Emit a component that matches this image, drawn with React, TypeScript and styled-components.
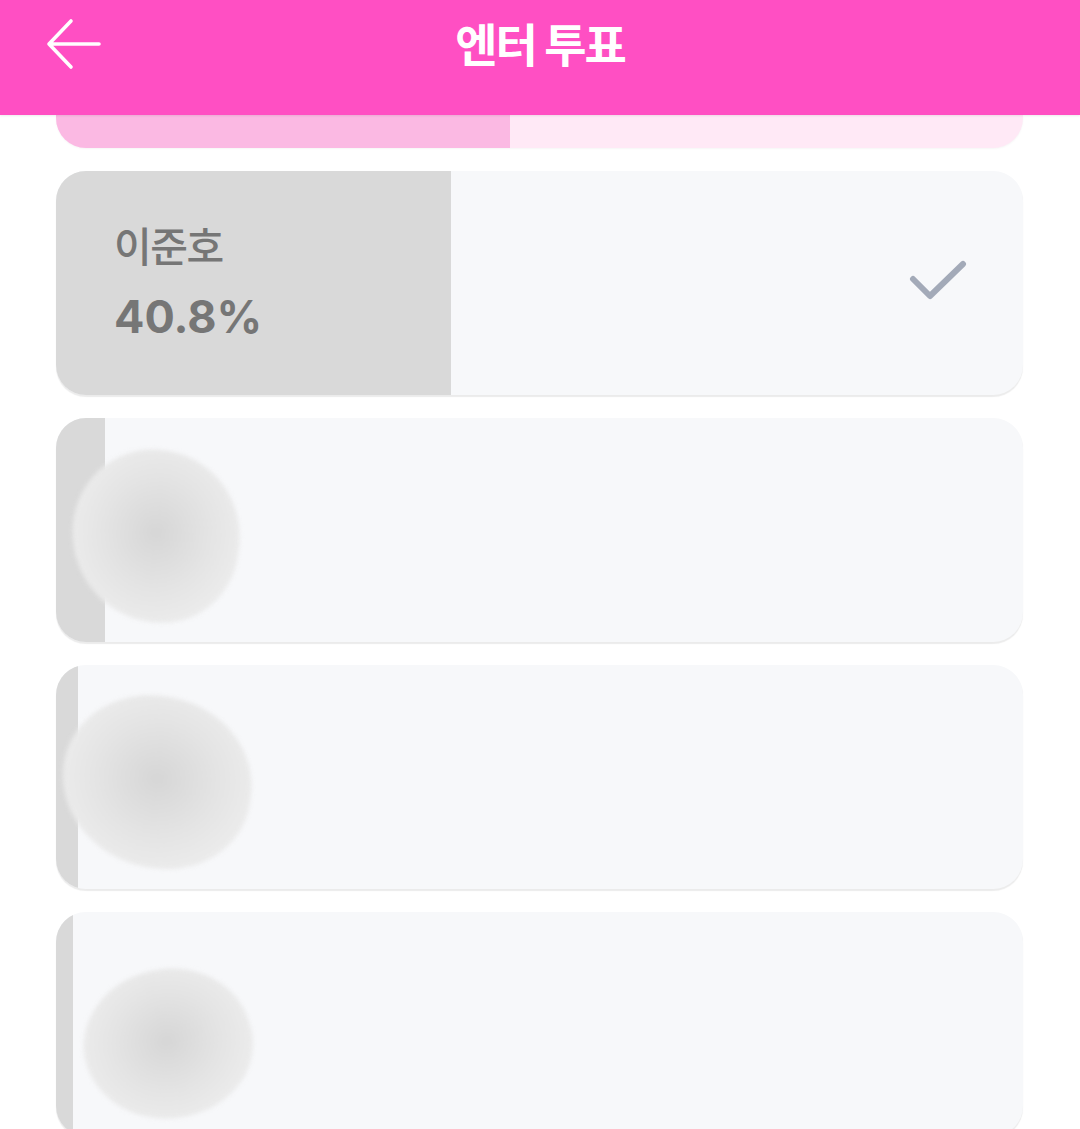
import * as React from 'react'
import styled, { createGlobalStyle } from 'styled-components'

const GlobalStyle = createGlobalStyle`
  html, body {
    margin: 0;
    padding: 0;
    background: #ffffff;
    height: 1129px;
    overflow: hidden;
    font-family: "Noto Sans CJK KR", "Noto Sans", sans-serif;
  }
`

const candidates = [
  { name: '이준호', rate: 40.8, voted: true },
  { name: null, rate: 5.1, voted: false },
  { name: null, rate: 2.3, voted: false },
  { name: null, rate: 1.8, voted: false },
]

export default function App() {
  return (
    <Page>
      <GlobalStyle />
      <Header>
        <BackButton aria-label="back">
          <svg width="58" height="54" viewBox="0 0 58 54" fill="none">
            <path d="M55 27H5M5 27L27 4M5 27L27 50" stroke="#fff" strokeWidth="3.6" strokeLinecap="round" strokeLinejoin="round" />
          </svg>
        </BackButton>
        <Title>엔터 투표</Title>
      </Header>

      <Content>
        <TopBar>
          <TopFill />
        </TopBar>

        {candidates.map((c, i) => (
          <Card key={i}>
            <Fill style={{ width: `${c.rate}%` }} />
            <CardBody>
              {c.name ? (
                <Info>
                  <Name>{c.name}</Name>
                  <Rate>{c.rate}%</Rate>
                </Info>
              ) : (
                <Scribble $shift={i} />
              )}
              {c.voted && (
                <Check width="58" height="44" viewBox="0 0 58 44" fill="none">
                  <path d="M4 20L21 37L54 5" stroke="#A3AAB8" strokeWidth="6" strokeLinecap="round" strokeLinejoin="round" />
                </Check>
              )}
            </CardBody>
          </Card>
        ))}
      </Content>
    </Page>
  )
}

const Page = styled.div`
  width: 1080px;
  height: 1129px;
  overflow: hidden;
  display: flex;
  flex-direction: column;
`

const Header = styled.header`
  height: 115px;
  flex-shrink: 0;
  background: #ff4fc3;
  display: flex;
  align-items: center;
  justify-content: center;
  position: relative;
  box-shadow: 0 1px 2px rgba(0, 0, 0, 0.08);
  z-index: 1;
`

const BackButton = styled.button`
  position: absolute;
  left: 44px;
  top: 17px;
  background: none;
  border: none;
  padding: 0;
  display: flex;
`

const Title = styled.h1`
  margin: 0 0 32px;
  color: #ffffff;
  font-size: 46px;
  font-weight: 700;
  letter-spacing: -2px;
`

const Content = styled.main`
  display: flex;
  flex-direction: column;
  gap: 23px;
  padding: 0 57px 0 56px;
`

const TopBar = styled.div`
  height: 33px;
  border-radius: 0 0 30px 30px;
  background: #ffe9f6;
  overflow: hidden;
  display: flex;
  box-shadow: 0 1px 2px rgba(0, 0, 0, 0.04);
`

const TopFill = styled.div`
  width: 454px;
  background: #fbb9e3;
`

const Card = styled.div`
  position: relative;
  height: 224px;
  flex-shrink: 0;
  border-radius: 30px;
  background: #f7f8fa;
  overflow: hidden;
  box-shadow: 0 1.5px 1px rgba(0, 0, 0, 0.08);
`

const Fill = styled.div`
  position: absolute;
  left: 0;
  top: 0;
  bottom: 0;
  background: #d9d9d9;
`

const CardBody = styled.div`
  position: relative;
  height: 100%;
  display: flex;
  align-items: center;
  justify-content: space-between;
  padding: 0 58px;
  box-sizing: border-box;
`

const Info = styled.div`
  display: flex;
  flex-direction: column;
  gap: 22px;
  color: #767676;
  margin-top: -4px;
`

const Name = styled.div`
  font-size: 41px;
  font-weight: 500;
  line-height: 50px;
  letter-spacing: -1.5px;
`

const Rate = styled.div`
  font-family: Inter, "Noto Sans", sans-serif;
  font-size: 45px;
  font-weight: 700;
  line-height: 52px;
  letter-spacing: 0px;
`

const Check = styled.svg`
  margin-right: -2px;
  margin-top: -4px;
`

const Scribble = styled.div<{ $shift: number }>`
  width: ${(p) => (p.$shift === 2 ? 190 : 168)}px;
  height: ${(p) => (p.$shift === 3 ? 150 : 172)}px;
  margin-left: ${(p) => (p.$shift === 2 ? -52 : p.$shift === 3 ? -30 : -42)}px;
  margin-top: ${(p) => (p.$shift === 3 ? 40 : p.$shift === 2 ? 10 : 12)}px;
  border-radius: 48% 52% 46% 54%;
  background: radial-gradient(ellipse at 50% 48%, #d6d6d6 0%, #e4e4e4 45%, #ececec 75%, #f1f1f1 100%);
  filter: blur(2px);
  transform: rotate(${(p) => (p.$shift === 3 ? -18 : 8)}deg);
  margin-right: auto;
`
